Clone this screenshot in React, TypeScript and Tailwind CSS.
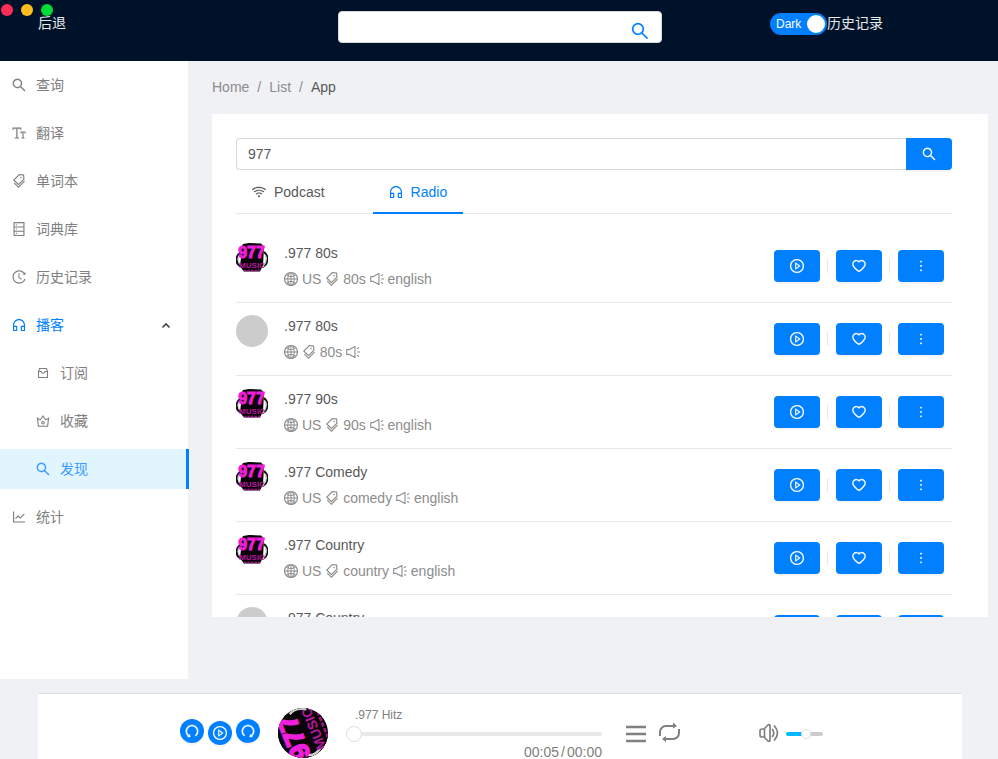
import { useState } from "react";
import type { IconType } from "react-icons";
import {
  AiOutlineCrown,
  AiOutlineCustomerService,
  AiOutlineDatabase,
  AiOutlineFontSize,
  AiOutlineGlobal,
  AiOutlineHeart,
  AiOutlineHistory,
  AiOutlineLineChart,
  AiOutlineMore,
  AiOutlinePlayCircle,
  AiOutlineRedo,
  AiOutlineSearch,
  AiOutlineTags,
  AiOutlineUndo,
  AiOutlineWifi,
} from "react-icons/ai";

type GlyphProps = { className?: string };
type Glyph = (props: GlyphProps) => React.ReactNode;

/* The Ant glyphs carry a margin inside their 1024 box; the tighter view box trims it. */
function ant(Icon: IconType, weight = 4): Glyph {
  return function AntGlyph({ className = "size-3.5" }: GlyphProps) {
    return <Icon viewBox="64 64 896 896" strokeWidth={weight} className={`shrink-0 ${className}`} aria-hidden="true" />;
  };
}

const Crown = ant(AiOutlineCrown);
const Headset = ant(AiOutlineCustomerService);
const Database = ant(AiOutlineDatabase);
const FontSize = ant(AiOutlineFontSize);
const Globe = ant(AiOutlineGlobal);
const Heart = ant(AiOutlineHeart, 12);
const History = ant(AiOutlineHistory);
const LineChart = ant(AiOutlineLineChart);
const More = ant(AiOutlineMore, 12);
const PlayCircle = ant(AiOutlinePlayCircle, 12);
const Redo = ant(AiOutlineRedo, 24);
const Search = ant(AiOutlineSearch, 12);
const Tags = ant(AiOutlineTags);
const Undo = ant(AiOutlineUndo, 24);
const Wifi = ant(AiOutlineWifi);

function Box({ className = "size-3.5" }: GlyphProps) {
  return (
    <svg viewBox="0 0 14 14" className={`shrink-0 ${className}`} fill="none" stroke="currentColor" strokeWidth="1.100" aria-hidden="true">
      <path d="M2.500 5.500v6h9v-6l-1-3h-7z" />
      <path d="M2.500 5.500h2.600c.2 1.200 1 1.800 1.900 1.800s1.700-.6 1.900-1.800h2.600" />
    </svg>
  );
}

function Speaker({ className = "size-3.5" }: GlyphProps) {
  return (
    <svg viewBox="0 0 14 14" className={`shrink-0 ${className}`} fill="none" stroke="currentColor" strokeWidth="1.100" aria-hidden="true">
      <path d="M.7 4.600h2.600L9 1.500v11L3.300 9.400H.7z" strokeLinejoin="round" />
      <path d="M11.300 7H14M11.100 3.700l2-1.300M11.100 10.300l2 1.300" />
    </svg>
  );
}

/* Station artwork: lettering on a black badge with headphones behind it. */
function StationArt({ className }: { className: string }) {
  return (
    <svg viewBox="0 0 32 32" className={className} aria-hidden="true">
      <path d="M4 11C-1 15 0 22 4 24M28 10c5 4 4 11 0 14" fill="none" stroke="#111" strokeWidth="2.200" />
      <path d="M4 13c-3 3-2 7 1 10M29 13c2 3 1 7-1 10" fill="none" stroke="#cfcfcf" strokeWidth="1.400" />
      <path d="M7 2 13 1l12 .5 3 3-.500 10-.500 9-3 6H8l-4-5 1-9L3 9z" fill="#0a040a" />
      <path d="M8 28.500h16" stroke="#a3128c" strokeWidth="1.500" strokeDasharray="2.500 1" />
      <g fontFamily="Liberation Sans, sans-serif" fontWeight="700" textAnchor="middle">
        <text x="15.500" y="15.500" fontSize="16" fill="#ee1fdb" stroke="#ee1fdb" strokeWidth="1">977</text>
        <text x="16" y="25.500" fontSize="8" fill="#b5179c">MUSIC</text>
      </g>
    </svg>
  );
}

type NavItemProps = { icon: Glyph; label: string; sub?: boolean; active?: boolean; open?: boolean };

function NavItem({ icon: Icon, label, sub, active, open }: NavItemProps) {
  const indent = sub ? "pl-9" : "pl-3";
  const tone = active
    ? "-mr-px border-r-3 border-[#007fff] bg-[#e1f5fe] text-[#3d9bff]"
    : open
      ? "text-[#007fff]"
      : "text-[#808080]";
  return (
    <li>
      <a href="#" className={`flex h-10 items-center gap-2.5 ${indent} ${tone}`}>
        <Icon />
        <span>{label}</span>
        {open && (
          <svg width="10" height="10" viewBox="0 0 10 10" className="mr-[17px] ml-auto" fill="none" stroke="#444" strokeWidth="1.600" aria-hidden="true">
            <path d="M1.500 7.500 5 4l3.500 3.500" />
          </svg>
        )}
      </a>
    </li>
  );
}

const nav: NavItemProps[] = [
  { icon: Search, label: "查询" },
  { icon: FontSize, label: "翻译" },
  { icon: Tags, label: "单词本" },
  { icon: Database, label: "词典库" },
  { icon: History, label: "历史记录" },
  { icon: Headset, label: "播客", open: true },
  { icon: Box, label: "订阅", sub: true },
  { icon: Crown, label: "收藏", sub: true },
  { icon: Search, label: "发现", sub: true, active: true },
  { icon: LineChart, label: "统计" },
];

type Station = { name: string; art: boolean; country: string; tag: string; language: string };

const stations: Station[] = [
  { name: ".977 80s", art: true, country: "US", tag: "80s", language: "english" },
  { name: ".977 80s", art: false, country: "", tag: "80s", language: "" },
  { name: ".977 90s", art: true, country: "US", tag: "90s", language: "english" },
  { name: ".977 Comedy", art: true, country: "US", tag: "comedy", language: "english" },
  { name: ".977 Country", art: true, country: "US", tag: "country", language: "english" },
  { name: ".977 Country", art: false, country: "", tag: "country", language: "" },
];

function ActionButton({ icon: Icon, label }: { icon: Glyph; label: string }) {
  return (
    <li className="flex items-center px-2">
      <button
        type="button"
        aria-label={label}
        className="flex h-8 w-[46px] items-center justify-center rounded-[4px] bg-[#007fff] text-white shadow-[0_2px_0_rgba(0,0,0,0.04)]"
      >
        <Icon />
      </button>
    </li>
  );
}

function Divider() {
  return <li aria-hidden="true" className="-ml-px h-3.5 w-px bg-[#e8e8e8]" />;
}

function StationRow({ station }: { station: Station }) {
  return (
    <li className="flex items-center border-b border-[#e8e8e8] py-3">
      <div className="flex flex-1 items-start gap-4">
        {station.art ? <StationArt className="size-8" /> : <span className="size-8 rounded-full bg-[#ccc]" />}
        <div>
          <h4 className="mb-1 leading-[22px] text-[#595959]">{station.name}</h4>
          <p className="leading-[22px] text-[#8c8c8c]">
            <Globe className="inline size-3.5 align-[-2px]" /> {station.country}{" "}
            <Tags className="inline size-3.5 align-[-2px]" /> {station.tag}{" "}
            <Speaker className="inline size-3.5 align-[-2px]" /> {station.language}
          </p>
        </div>
      </div>
      <ul className="flex items-center">
        <ActionButton icon={PlayCircle} label="Play" />
        <Divider />
        <ActionButton icon={Heart} label="Favourite" />
        <Divider />
        <ActionButton icon={More} label="More" />
      </ul>
    </li>
  );
}

function RoundButton({ icon: Icon, label, lower }: { icon: Glyph; label: string; lower?: boolean }) {
  return (
    <button
      type="button"
      aria-label={label}
      className={`flex size-6 items-center justify-center rounded-full bg-[#007fff] text-white shadow-[0_2px_0_rgba(0,0,0,0.04)] ${lower ? "mt-0.5" : ""}`}
    >
      <Icon />
    </button>
  );
}

export default function App() {
  const [dark, setDark] = useState(true);
  const [query, setQuery] = useState("977");
  const [position, setPosition] = useState(0);
  const [volume, setVolume] = useState(55);

  return (
    <div className="flex h-screen flex-col overflow-hidden bg-[#f0f1f5] font-['Liberation_Sans','Noto_Sans_CJK_SC',sans-serif] text-sm leading-[22px]">
      <header className="relative grid h-[61px] shrink-0 grid-cols-[1fr_324px_1fr] items-start bg-[#001229] pr-9 pl-[38px] text-[#e6e8ea]">
        <div className="absolute top-1 left-px flex gap-2">
          <span className="size-3 rounded-full bg-[#ff2d55]" />
          <span className="size-3 rounded-full bg-[#ffbd1e]" />
          <span className="size-3 rounded-full bg-[#00dc37]" />
        </div>
        <button type="button" className="mt-3 justify-self-start">后退</button>
        <form className="mt-[11px] flex h-8 items-end rounded-[4px] border border-[#d9d9d9] bg-white pr-3" onSubmit={(e) => e.preventDefault()}>
          <input aria-label="Search words" className="h-full min-w-0 flex-1 bg-transparent px-3 text-[#595959] outline-none" />
          <button type="submit" aria-label="Search" className="pb-0.5 text-[#007fff]">
            <Search className="size-[18px]" />
          </button>
        </form>
        <div className="mt-3 flex items-start pl-[108px]">
          <button
            type="button"
            role="switch"
            aria-checked={dark}
            onClick={() => setDark(!dark)}
            className={`mt-px flex h-[22px] w-[57px] items-center justify-between rounded-full bg-[#007fff] pr-0.5 pl-1.5 text-xs text-white ${dark ? "" : "opacity-60"}`}
          >
            Dark
            <span className="size-[18px] rounded-full bg-white" />
          </button>
          <a href="#">历史记录</a>
        </div>
      </header>

      <div className="flex min-h-0 flex-1">
        <nav className="mr-px w-[188px] shrink-0 bg-white">
          <ul className="flex flex-col gap-2 pt-1">
            {nav.map((item) => (
              <NavItem key={item.label} {...item} />
            ))}
          </ul>
        </nav>

        <main className="flex min-w-0 flex-1 flex-col pr-2.5 pb-[62px] pl-[23px]">
          <nav aria-label="Breadcrumb" className="py-[15px] leading-[23px] text-[#8c8c8c]">
            <ol className="flex gap-2">
              <li><a href="#">Home</a></li>
              <li aria-hidden="true">/</li>
              <li><a href="#">List</a></li>
              <li aria-hidden="true">/</li>
              <li className="text-[#595959]">App</li>
            </ol>
          </nav>

          <section className="min-h-0 flex-1 overflow-hidden bg-white pt-6 pr-9 pl-6">
            <form className="flex" onSubmit={(e) => e.preventDefault()}>
              <input
                aria-label="Search stations"
                value={query}
                onChange={(e) => setQuery(e.target.value)}
                className="h-8 min-w-0 flex-1 rounded-l-[4px] border border-r-0 border-[#d9d9d9] px-[11px] text-[#595959] outline-none"
              />
              <button type="submit" aria-label="Search" className="flex h-8 w-[46px] items-center justify-center rounded-r-[4px] bg-[#007fff] text-white shadow-[0_2px_0_rgba(0,0,0,0.04)]">
                <Search />
              </button>
            </form>

            <div role="tablist" className="mb-4 flex h-11 gap-8 border-b border-[#e8e8e8]">
              <button type="button" role="tab" aria-selected="false" className="flex items-center gap-2 px-4 text-[#595959]">
                <Wifi />
                Podcast
              </button>
              <button type="button" role="tab" aria-selected="true" className="-mb-px flex items-center gap-2 border-b-2 border-[#007fff] px-4 pt-0.5 text-[#007fff]">
                <Headset />
                Radio
              </button>
            </div>

            <ul>
              {stations.map((station, index) => (
                <StationRow key={index} station={station} />
              ))}
            </ul>
          </section>
        </main>
      </div>

      <footer className="mt-3.5 mr-9 ml-[38px] flex h-[66px] shrink-0 items-start border-t border-[#dfe0e3] bg-white pl-[142px] text-[#808080]">
        <div className="mt-[25px] flex items-start gap-1">
          <RoundButton icon={Undo} label="Rewind" />
          <RoundButton icon={PlayCircle} label="Play" lower />
          <RoundButton icon={Redo} label="Forward" />
        </div>
        <div className="mt-3.5 ml-[18px] size-[50px] shrink-0 overflow-hidden rounded-full bg-black">
          <StationArt className="size-full -rotate-[112deg] scale-110" />
        </div>
        <div className="ml-[18px] flex max-w-[256px] flex-1 flex-col">
          <span className="mt-3 pl-[9px] text-xs leading-[18px]">.977 Hitz</span>
          <input
            type="range"
            aria-label="Position"
            value={position}
            onChange={(e) => setPosition(Number(e.target.value))}
            className="mt-0.5 mb-px h-4 w-full appearance-none bg-transparent [&::-webkit-slider-runnable-track]:h-1 [&::-webkit-slider-runnable-track]:rounded-full [&::-webkit-slider-runnable-track]:bg-[#e9e9e9] [&::-webkit-slider-thumb]:-mt-1.5 [&::-webkit-slider-thumb]:size-4 [&::-webkit-slider-thumb]:appearance-none [&::-webkit-slider-thumb]:rounded-full [&::-webkit-slider-thumb]:border [&::-webkit-slider-thumb]:border-[#ddd] [&::-webkit-slider-thumb]:bg-white"
          />
          <div className="flex justify-end gap-0.5 leading-[18px]">
            <span>00:05</span>
            <span>/</span>
            <span>00:00</span>
          </div>
        </div>
        <button type="button" aria-label="Playlist" className="mt-[30px] ml-6">
          <svg width="20" height="20" viewBox="0 0 20 20" fill="none" stroke="currentColor" strokeWidth="2.400" aria-hidden="true">
            <path d="M1 3h18M1 10h18M1 17h18" strokeLinecap="square" />
          </svg>
        </button>
        <button type="button" aria-label="Repeat" className="mt-7 ml-3">
          <svg width="22" height="22" viewBox="0 0 22 22" fill="none" stroke="currentColor" strokeWidth="2" aria-hidden="true">
            <path d="M2 14v-4a6 6 0 0 1 6-6h9M21 7v4a6 6 0 0 1-6 6H7" />
            <path d="M15 .5v6l4-2.500zM8 14v6l-4-3z" fill="currentColor" stroke="none" />
          </svg>
        </button>
        <div className="mt-7 ml-auto flex items-center gap-[7px] pr-[139px]">
          <svg width="20" height="20" viewBox="0 0 20 20" fill="none" stroke="currentColor" strokeWidth="1.700" strokeLinejoin="round" strokeLinecap="round" aria-hidden="true">
            <path d="M1 8a2 2 0 0 1 2-2h2l4-4q2-1 2 1v14q0 2-2 1l-4-4H3a2 2 0 0 1-2-2zM5.500 6v8" />
            <path d="M13.500 6.500q2.500 3.500 0 7M15.500 3q6 7 0 14" />
          </svg>
          <input
            type="range"
            aria-label="Volume"
            value={volume}
            onChange={(e) => setVolume(Number(e.target.value))}
            className="mt-0.5 h-5 w-[37px] appearance-none bg-transparent [&::-webkit-slider-runnable-track]:h-1 [&::-webkit-slider-runnable-track]:rounded-full [&::-webkit-slider-runnable-track]:bg-linear-to-r [&::-webkit-slider-runnable-track]:from-[#00b8ff] [&::-webkit-slider-runnable-track]:from-50% [&::-webkit-slider-runnable-track]:to-[#ccc] [&::-webkit-slider-runnable-track]:to-50% [&::-webkit-slider-thumb]:-mt-[3px] [&::-webkit-slider-thumb]:size-2.5 [&::-webkit-slider-thumb]:appearance-none [&::-webkit-slider-thumb]:rounded-full [&::-webkit-slider-thumb]:border [&::-webkit-slider-thumb]:border-[#ddd] [&::-webkit-slider-thumb]:bg-white"
          />
        </div>
      </footer>
    </div>
  );
}
